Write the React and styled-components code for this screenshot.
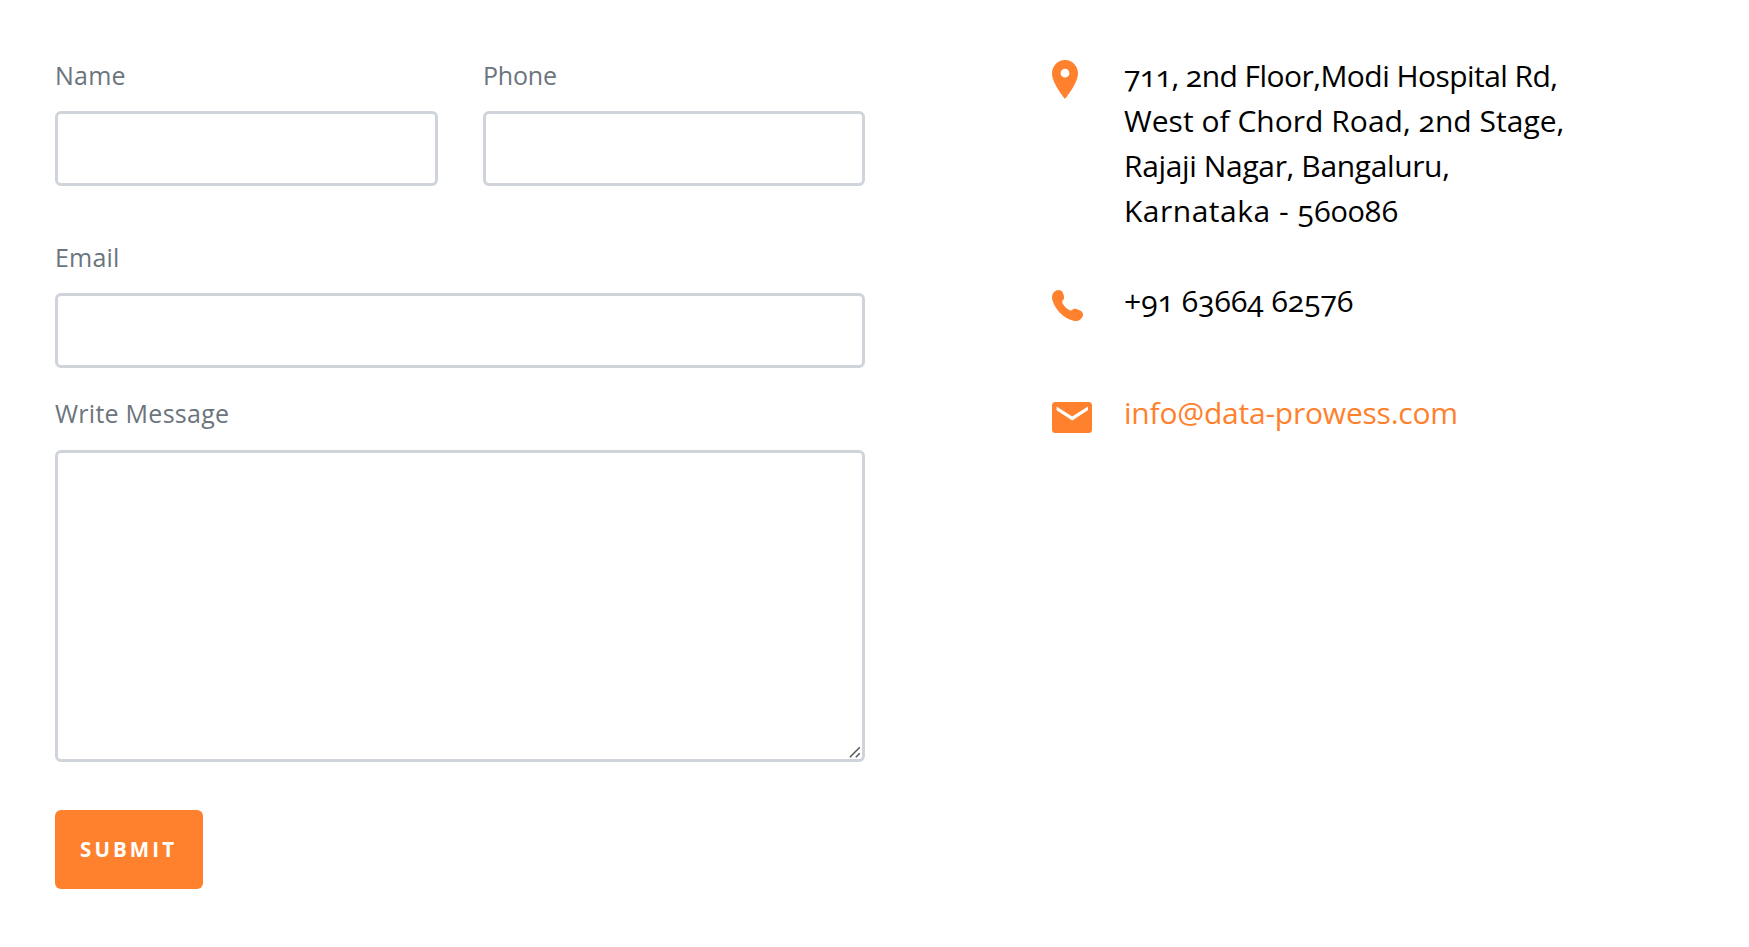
import React from "react";
import styled, { createGlobalStyle } from "styled-components";

const GlobalStyle = createGlobalStyle`
  *, *::before, *::after { box-sizing: border-box; }
  body {
    margin: 0;
    background: #fff;
    color: #000;
    font-family: "Open Sans", "Noto Sans", sans-serif;
    font-feature-settings: "onum";
  }
`;

const Page = styled.main`
  display: grid;
  grid-template-columns: 810px 1fr;
  column-gap: 187px;
  min-height: 947px;
  padding: 53px 55px 0;
`;

const Form = styled.form`
  display: flex;
  flex-direction: column;
  align-items: stretch;
  padding-top: 3px;
`;

const FieldRow = styled.div`
  display: grid;
  grid-template-columns: 383px 382px;
  column-gap: 45px;
  margin-bottom: 52px;
`;

const Field = styled.div`
  display: flex;
  flex-direction: column;
  margin-bottom: ${(p) => p.$after || 0}px;
`;

const Label = styled.label`
  margin-bottom: ${(p) => p.$gap || 17}px;
  color: #6c757d;
  font-size: 25px;
  line-height: 38px;
  letter-spacing: ${(p) => p.$tracking || 0}px;
`;

const Input = styled.input`
  width: 100%;
  height: 75px;
  padding: 0 16px;
  border: 3px solid #ced4da;
  border-radius: 6px;
  background: #fff;
  font: inherit;
  outline: none;
`;

const TextAreaFrame = styled.div`
  position: relative;
`;

const TextArea = styled.textarea`
  display: block;
  width: 100%;
  height: 312px;
  padding: 16px;
  border: 3px solid #ced4da;
  border-radius: 6px;
  background: #fff;
  font: inherit;
  outline: none;
  resize: none;
`;

const ResizeGrip = styled.svg`
  position: absolute;
  right: 4px;
  bottom: 4px;
  fill: none;
  stroke: #555;
  stroke-width: 1.5;
  pointer-events: none;
`;

const SubmitButton = styled.button`
  align-self: flex-start;
  width: 148px;
  height: 79px;
  padding: 0 0 2px 25px;
  border: 0;
  border-radius: 6px;
  background: #ff812d;
  color: #fff;
  font: 700 20.5px/30px "Open Sans", sans-serif;
  letter-spacing: 3.1px;
  text-align: left;
`;

const ContactList = styled.address`
  display: flex;
  flex-direction: column;
  font-style: normal;
`;

const ContactItem = styled.div`
  display: grid;
  grid-template-columns: 72px 1fr;
  align-items: start;
  margin-bottom: ${(p) => p.$after || 0}px;
`;

const Icon = styled.svg`
  display: block;
  margin-top: ${(p) => p.$top}px;
  fill: #ff812d;
`;

const Line = styled.span`
  display: block;
  font-size: 30px;
  line-height: 45px;
  white-space: nowrap;
  letter-spacing: ${(p) => p.$tracking || 0}px;
`;

const MailLink = styled.a`
  color: #ff812d;
  text-decoration: none;
`;

export default function App() {
  return (
    <>
      <GlobalStyle />
      <Page>
        <Form onSubmit={(e) => e.preventDefault()}>
          <FieldRow>
            <Field>
              <Label htmlFor="name" $tracking={0.25}>Name</Label>
              <Input id="name" type="text" />
            </Field>
            <Field>
              <Label htmlFor="phone" $tracking={-0.2}>Phone</Label>
              <Input id="phone" type="tel" />
            </Field>
          </FieldRow>
          <Field $after={26}>
            <Label htmlFor="email" $tracking={0.2}>Email</Label>
            <Input id="email" type="email" />
          </Field>
          <Field $after={48}>
            <Label htmlFor="message" $tracking={0.26} $gap={18}>Write Message</Label>
            <TextAreaFrame>
              <TextArea id="message" />
              <ResizeGrip width="12" height="12" viewBox="0 0 12 12">
                <path d="M.8 11.300 10.800 1.300M6.800 11.300l4-4" />
              </ResizeGrip>
            </TextAreaFrame>
          </Field>
          <SubmitButton type="submit">SUBMIT</SubmitButton>
        </Form>

        <ContactList>
          <ContactItem $after={45}>
            <Icon $top={7} width="26" height="39" viewBox="0 0 26 39">
              <path fillRule="evenodd" d="M13 0C5.800 0 0 5.900 0 13.500 0 23.500 13 39 13 39s13-15.500 13-25.500C26 5.900 20.200 0 13 0zm0 8.800a4.400 4.400 0 1 1 0 8.800 4.400 4.400 0 0 1 0-8.800z" />
            </Icon>
            <div>
              <Line $tracking={-0.55}>711, 2nd Floor,Modi Hospital Rd,</Line>
              <Line $tracking={0.02}>West of Chord Road, 2nd Stage,</Line>
              <Line $tracking={-0.36}>Rajaji Nagar, Bangaluru,</Line>
              <Line $tracking={0.5}>Karnataka - 560086</Line>
            </div>
          </ContactItem>
          <ContactItem $after={67}>
            <Icon $top={12} width="31" height="31" viewBox="0 0 31 31">
              <path d="M4.200.600C6.500-.600 9.500.100 10.700 2.400l1.300 3.700c.500 1.800-.100 3.300-1.300 4.500-.8.800-.6 1.800 0 2.800 1.500 2.700 3.700 4.900 6.500 6.700 1 .600 2 .700 2.800-.100 1.300-1.200 2.900-1.500 4.600-.9l3.600 1.500c2.400 1 3.400 3.700 2.400 6.100C28.500 30.500 25 31.600 21.400 30.800 11.500 28.300 2.500 18.500.3 9.700-.6 6 .4 2.500 4.200.600z" />
            </Icon>
            <Line $tracking={0.03}>+91 63664 62576</Line>
          </ContactItem>
          <ContactItem>
            <Icon $top={12} width="40" height="31" viewBox="0 0 40 31">
              <path fillRule="evenodd" d="M3.500 0h33A3.500 3.500 0 0 1 40 3.500v24a3.500 3.500 0 0 1-3.500 3.500h-33A3.500 3.500 0 0 1 0 27.500v-24A3.500 3.500 0 0 1 3.500 0zM4.600 4.400v3.900l15.600 10.200L35.900 8.300V4.400L20.200 14.500z" />
            </Icon>
            <Line as={MailLink} href="mailto:info@data-prowess.com" $tracking={-0.22}>info@data-prowess.com</Line>
          </ContactItem>
        </ContactList>
      </Page>
    </>
  );
}
